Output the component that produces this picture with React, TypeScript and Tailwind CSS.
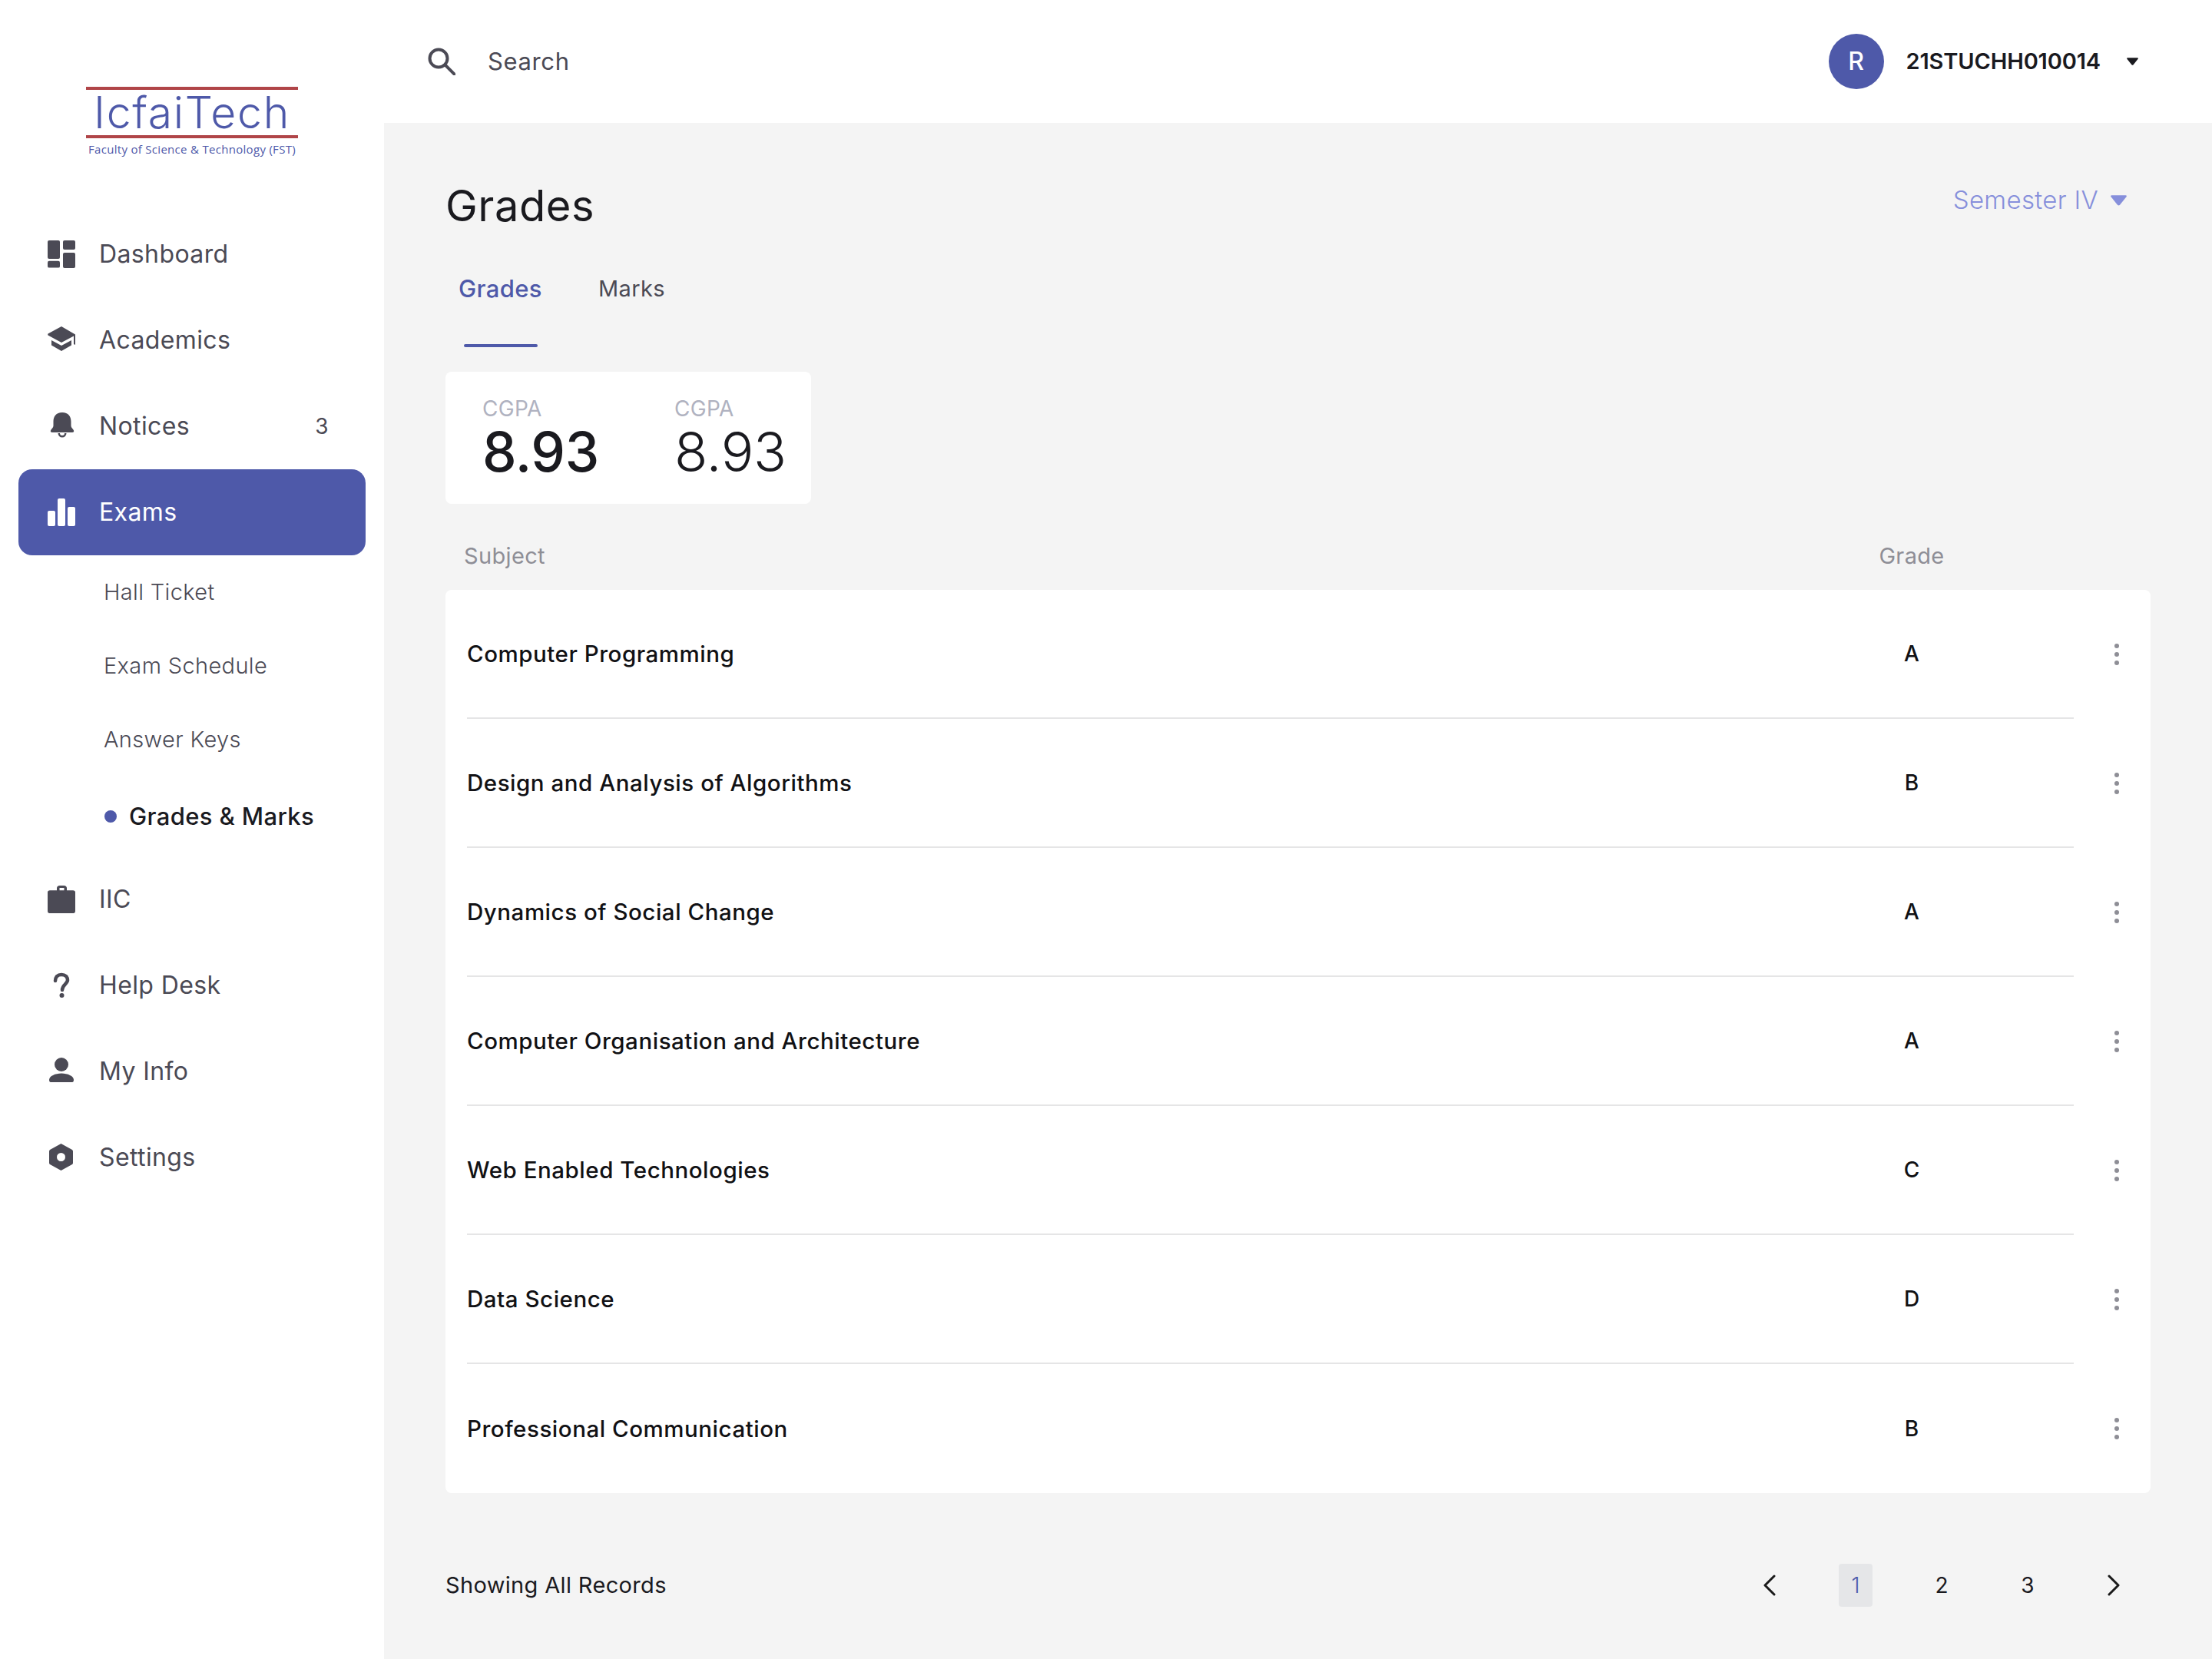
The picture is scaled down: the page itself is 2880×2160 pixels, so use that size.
import { ReactNode } from "react";

const fill = "#4b4a55";

const Icon = ({ children, color = fill, size = 36 }: { children: ReactNode; color?: string; size?: number }) => (
  <svg width={size} height={size} viewBox="0 0 36 36" fill={color} className="shrink-0">
    {children}
  </svg>
);

const icons: Record<string, (c?: string) => ReactNode> = {
  dashboard: () => (
    <Icon>
      <rect x="0" y="0" width="16" height="24" rx="2" />
      <rect x="20" y="0" width="16" height="12" rx="2" />
      <rect x="0" y="28" width="16" height="8" rx="2" transform="translate(0 -4) scale(1 1.1)" />
      <rect x="20" y="16" width="16" height="20" rx="2" />
    </Icon>
  ),
  academics: () => (
    <Icon>
      <path d="M18 0 L0.5 9.5 Q0 10.5 0.5 11.5 L18 21 L34 12.5 V23 Q35.5 24.5 37 23 V11 L18 0Z" />
      <path d="M5 18 L18 25 L31 18 V24.5 L18 32 L5 24.5Z" />
    </Icon>
  ),
  bell: () => (
    <Icon>
      <path d="M19 0 C11 0 7.5 5 7.5 12 V17 C7.5 20 5 21 4 23.5 C3.5 25 4 26 6 26 H32 C34 26 34.5 25 34 23.5 C33 21 30.5 20 30.5 17 V12 C30.5 5 27 0 19 0Z" />
      <path d="M13.5 27 H16 A3 3 0 0 0 22 27 H24.5 A5.5 5.5 0 0 1 13.5 27Z" />
    </Icon>
  ),
  chart: (c) => (
    <Icon color={c}>
      <rect x="0" y="16" width="10" height="20" rx="2" />
      <rect x="13" y="0" width="10" height="36" rx="2" />
      <rect x="26" y="11" width="10" height="25" rx="2" />
    </Icon>
  ),
  briefcase: () => (
    <Icon>
      <path d="M12 7 V4 Q12 0 16 0 H21 Q25 0 25 4 V7 H33 Q36 7 36 10 V38 Q36 41 33 41 H3 Q0 41 0 38 V10 Q0 7 3 7Z M15.5 7 H21.5 V3.5 H15.5Z" fillRule="evenodd" transform="scale(1 0.88)" />
    </Icon>
  ),
  help: () => (
    <Icon>
      <path
        d="M10 12 C10 7 13 4 18 4 C23 4 26 7 26 11 C26 16 19 17 19 24"
        fill="none"
        stroke={fill}
        strokeWidth="4.5"
        strokeLinecap="round"
      />
      <circle cx="18.5" cy="31" r="3" />
    </Icon>
  ),
  person: () => (
    <Icon>
      <circle cx="18" cy="9" r="9" />
      <path d="M2 29 C2 24 10 20.5 18 20.5 C26 20.5 34 24 34 29 C34 31.5 33 32 31 32 H5 C3 32 2 31.5 2 29Z" />
    </Icon>
  ),
  settings: () => (
    <Icon>
      <path
        d="M17.5 0 L32 8 Q33 9 33 10 V25 Q33 26.5 32 27 L17.5 35 L3 27 Q2 26.5 2 25 V10 Q2 9 3 8Z M17.5 12 A5.5 5.5 0 1 0 17.5 23 A5.5 5.5 0 1 0 17.5 12Z"
        fillRule="evenodd"
      />
    </Icon>
  ),
};

const NavItem = ({ icon, label, badge, active }: { icon: string; label: string; badge?: string; active?: boolean }) => (
  <div
    className={`mx-[24px] flex h-[112px] items-center rounded-[18px] pl-[38px] pr-[48px] text-[32px] tracking-[0.012em] ${
      active ? "bg-[#4e59a9] text-white" : "text-[#4b4a55]"
    }`}
  >
    {icons[icon](active ? "#ffffff" : undefined)}
    <span className="ml-[31px] flex-1">{label}</span>
    {badge && <span className="text-[28px]">{badge}</span>}
  </div>
);

const SubItem = ({ label }: { label: string }) => (
  <div className="flex h-[96px] items-center pl-[135px] text-[29px] font-light tracking-[0.012em] text-[#4b4a55]">{label}</div>
);

const Caret = ({ color, w, h }: { color: string; w: number; h: number }) => (
  <svg width={w} height={h} viewBox="0 0 20 13" fill={color} className="shrink-0">
    <path d="M1.5 0 H18.5 Q20.5 0 19.5 2 L11.5 12 Q10 13.5 8.5 12 L0.5 2 Q-0.5 0 1.5 0Z" />
  </svg>
);

const Chevron = ({ right }: { right?: boolean }) => (
  <svg width="16" height="28" viewBox="0 0 16 28" fill="none" stroke="#1a1a1a" strokeWidth="3" strokeLinecap="round" strokeLinejoin="round">
    <path d={right ? "M2 2 L14 14 L2 26" : "M14 2 L2 14 L14 26"} />
  </svg>
);

const subjects = [
  ["Computer Programming", "A"],
  ["Design and Analysis of Algorithms", "B"],
  ["Dynamics of Social Change", "A"],
  ["Computer Organisation and Architecture", "A"],
  ["Web Enabled Technologies", "C"],
  ["Data Science", "D"],
  ["Professional Communication", "B"],
];

const Row = ({ name, grade, last }: { name: string; grade: string; last: boolean }) => (
  <div className="flex h-[168px] pl-[28px]">
    <div className={`flex flex-1 items-center ${last ? "" : "border-b-2 border-[#e5e5e6]"}`}>
      <span className="flex-1 text-[29.5px] font-medium tracking-[0.018em] text-[#111114]">{name}</span>
      <span className="w-[422px] text-center text-[28px] font-medium text-[#111114]">{grade}</span>
    </div>
    <div className="flex w-[100px] items-center pl-[53px]">
      <div className="flex flex-col gap-[5px]">
        <span className="h-[6px] w-[6px] rounded-full bg-[#8e8e96]" />
        <span className="h-[6px] w-[6px] rounded-full bg-[#8e8e96]" />
        <span className="h-[6px] w-[6px] rounded-full bg-[#8e8e96]" />
      </div>
    </div>
  </div>
);

export default function App() {
  return (
    <div className="flex h-[2160px] w-[2880px] overflow-hidden bg-white font-['Inter',sans-serif]">
      <aside className="w-[500px] shrink-0">
        <div className="flex h-[275px] flex-col pl-[112px] pt-[113px]">
          <div className="flex h-[67px] w-[276px] items-center justify-center border-y-[4px] border-[#b04548] text-[57px] font-light leading-none tracking-[0.03em] text-[#4e59a9]">
            IcfaiTech
          </div>
          <div className="mt-[4px] w-[276px] text-center font-['Open_Sans',sans-serif] text-[15px] leading-[20px] tracking-[0.02em] text-[#4e59a9]">
            Faculty of Science &amp; Technology (FST)
          </div>
        </div>
        <NavItem icon="dashboard" label="Dashboard" />
        <NavItem icon="academics" label="Academics" />
        <NavItem icon="bell" label="Notices" badge="3" />
        <NavItem icon="chart" label="Exams" active />
        <div className="flex flex-col">
          <SubItem label="Hall Ticket" />
          <SubItem label="Exam Schedule" />
          <SubItem label="Answer Keys" />
          <div className="flex h-[104px] items-center pl-[136px] text-[31px] font-medium tracking-[0.012em] text-[#1a1a1f]">
            <span className="mr-[16px] h-[16px] w-[16px] rounded-full bg-[#4e59a9]" />
            Grades &amp; Marks
          </div>
        </div>
        <NavItem icon="briefcase" label="IIC" />
        <NavItem icon="help" label="Help Desk" />
        <NavItem icon="person" label="My Info" />
        <NavItem icon="settings" label="Settings" />
      </aside>

      <div className="flex flex-1 flex-col">
        <header className="flex h-[160px] shrink-0 items-center pl-[57px] pr-[96px]">
          <svg width="36" height="36" viewBox="0 0 36 36" fill="none" stroke={fill} strokeWidth="4">
            <circle cx="14" cy="14" r="11.5" />
            <path d="M22.5 22.5 L34.5 34.5" strokeLinecap="square" />
          </svg>
          <span className="ml-[42px] flex-1 text-[31px] tracking-[0.02em] text-[#4b4a55]">Search</span>
          <div className="flex h-[72px] w-[72px] items-center justify-center rounded-full bg-[#4e59a9] text-[32px] font-medium text-white">R</div>
          <span className="ml-[29px] text-[29px] font-semibold tracking-[-0.005em] text-[#1a1a1f]">21STUCHH010014</span>
          <span className="ml-[34px]">
            <Caret color="#1a1a1f" w={15} h={10} />
          </span>
        </header>

        <main className="flex flex-1 flex-col bg-[#f4f4f4] px-[80px]">
          <div className="flex h-[140px] shrink-0 items-center justify-between pt-[76px] pr-[31px]">
            <h1 className="text-[56px] font-normal leading-none tracking-[0.01em] text-[#1a1a1f]">Grades</h1>
            <div className="mb-[14px] flex items-center gap-[16px] text-[33px] font-light tracking-[0.01em] text-[#868fdb]">
              Semester IV
              <Caret color="#868fdb" w={21} h={14} />
            </div>
          </div>

          <div className="flex h-[152px] shrink-0 pl-[17px]">
            <div className="relative flex h-full w-[182px] items-center pb-[0px] pt-[0px] text-[31px] font-medium tracking-[0.012em] text-[#4e59a9]">
              Grades
              <span className="absolute bottom-0 left-[7px] h-[4px] w-[96px] rounded-full bg-[#4e59a9]" />
            </div>
            <div className="flex h-full items-center text-[29px] tracking-[0.012em] text-[#4b4a55]">Marks</div>
          </div>

          <div className="mt-[32px] flex h-[172px] w-[476px] shrink-0 rounded-[8px] bg-white pl-[48px] pt-[30px]">
            <div className="w-[250px]">
              <div className="text-[28px] leading-[36px] tracking-[0.01em] text-[#b0b2c0]">CGPA</div>
              <div className="text-[71px] font-medium leading-[76px] tracking-[-0.005em] text-[#1a1a1f]">8.93</div>
            </div>
            <div>
              <div className="text-[28px] leading-[36px] tracking-[0.01em] text-[#b0b2c0]">CGPA</div>
              <div className="text-[71px] font-light leading-[76px] tracking-[-0.005em] text-[#1a1a1f]">8.93</div>
            </div>
          </div>

          <div className="flex h-[112px] shrink-0 items-center pl-[24px] pr-[100px] pt-[24px] text-[29px] tracking-[0.012em] text-[#8e8e96]">
            <span className="flex-1">Subject</span>
            <span className="w-[422px] text-center">Grade</span>
          </div>

          <div className="flex shrink-0 flex-col rounded-[8px] bg-white">
            {subjects.map(([name, grade], i) => (
              <Row key={name} name={name} grade={grade} last={i === subjects.length - 1} />
            ))}
          </div>

          <div className="flex items-start justify-between pt-[92px] pr-[26px]">
            <span className="flex h-[56px] items-center text-[29px] tracking-[0.012em] text-[#1a1a1f]">Showing All Records</span>
            <div className="flex gap-[68px] text-[28px] text-[#1a1a1f]">
              <span className="flex h-[56px] w-[44px] items-center justify-center">
                <Chevron />
              </span>
              <span className="flex h-[56px] w-[44px] items-center justify-center rounded-[4px] bg-[#e5e6e8] font-light text-[#4e59a9]">1</span>
              <span className="flex h-[56px] w-[44px] items-center justify-center">2</span>
              <span className="flex h-[56px] w-[44px] items-center justify-center">3</span>
              <span className="flex h-[56px] w-[44px] items-center justify-center">
                <Chevron right />
              </span>
            </div>
          </div>
        </main>
      </div>
    </div>
  );
}
